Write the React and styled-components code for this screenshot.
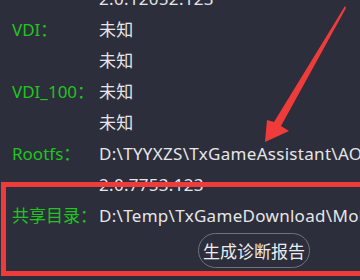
import React from 'react'
import { styled, createGlobalStyle } from 'styled-components'

const GlobalStyle = createGlobalStyle`
  html, body {
    margin: 0;
    padding: 0;
    background: #2c2e3b;
  }
  body {
    font-family: 'Noto Sans', 'Noto Sans CJK SC', sans-serif;
  }
`

const rows = [
  { label: '', value: '2.0.12052.123' },
  { label: 'VDI：', value: '未知' },
  { label: '', value: '未知' },
  { label: 'VDI_100：', value: '未知' },
  { label: '', value: '未知' },
  { label: 'Rootfs：', value: 'D:\\TYYXZS\\TxGameAssistant\\AOW\\rootfs' },
  { label: '', value: '2.0.7753.123' },
  { label: '共享目录：', value: 'D:\\Temp\\TxGameDownload\\MobileGamePCShared' },
]

const App = () => {
  return (
    <StPage>
      <GlobalStyle />
      <StList>
        {rows.map((row, i) => (
          <StRow key={i}>
            <StLabel>{row.label}</StLabel>
            <StValue>{row.value}</StValue>
          </StRow>
        ))}
        <StButtonRow>
          <StButton>生成诊断报告</StButton>
        </StButtonRow>
      </StList>

      <StHighlight />

      <StArrow width='360' height='280' viewBox='0 0 360 280'>
        <polygon
          points='345,6 346,8 281,126 289,131 265,142 267,120 274,122'
          fill='#f03b3b'
        />
      </StArrow>
    </StPage>
  )
}

export default App

const StPage = styled.div`
  position: relative;
  width: 360px;
  height: 280px;
  overflow: hidden;
  background: #2c2e3b;
`

const StList = styled.div`
  display: flex;
  flex-direction: column;
  margin-top: -17px;
  padding-left: 12px;
`

const StRow = styled.div`
  display: grid;
  grid-template-columns: 87px 1fr;
  height: 31px;
  line-height: 31px;
  font-size: 17px;
`

const StLabel = styled.div`
  color: #20c520;
  white-space: nowrap;
`

const StValue = styled.div`
  color: #e6e6e8;
  white-space: nowrap;
  overflow: hidden;
  letter-spacing: 0.3px;
`

const StButtonRow = styled.div`
  display: flex;
  padding-top: 2px;
  padding-left: 186px;
`

const StButton = styled.button`
  height: 35px;
  padding: 0 4px;
  border: 1px solid #70727d;
  border-radius: 18px;
  background: transparent;
  color: #ececee;
  font-family: 'Noto Sans CJK SC', sans-serif;
  font-size: 17px;
  white-space: nowrap;
`

const StHighlight = styled.div`
  position: absolute;
  left: 1px;
  top: 182px;
  width: 380px;
  height: 94px;
  box-sizing: border-box;
  border: 5px solid #f03b3b;
`

const StArrow = styled.svg`
  position: absolute;
  left: 0;
  top: 0;
  pointer-events: none;
`
